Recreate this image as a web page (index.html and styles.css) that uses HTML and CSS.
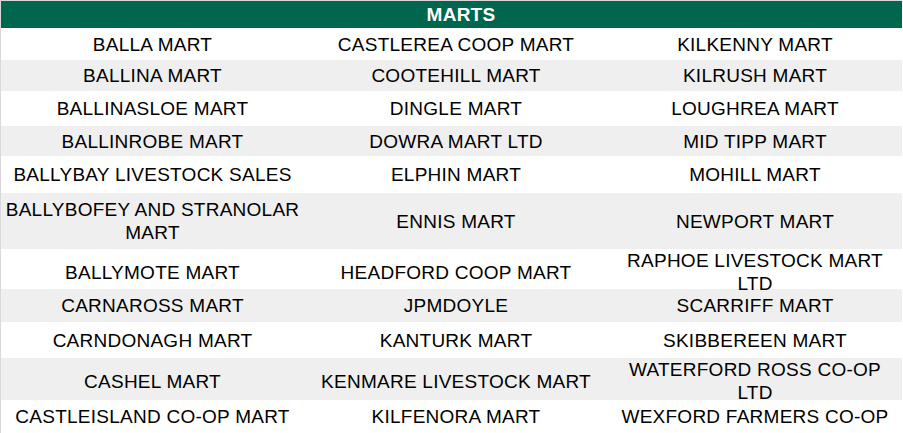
FILE: index.html
```html
<!DOCTYPE html>
<html>
<head>
<meta charset="utf-8">
<link rel="stylesheet" href="styles.css">
</head>
<body>
<div class="marts">
  <div class="head">MARTS</div>
  <div class="row h32"><div class="cell">BALLA MART</div><div class="cell">CASTLEREA COOP MART</div><div class="cell">KILKENNY MART</div></div>
  <div class="row alt h31"><div class="cell">BALLINA MART</div><div class="cell">COOTEHILL MART</div><div class="cell">KILRUSH MART</div></div>
  <div class="row h35"><div class="cell">BALLINASLOE MART</div><div class="cell">DINGLE MART</div><div class="cell">LOUGHREA MART</div></div>
  <div class="row alt h30"><div class="cell">BALLINROBE MART</div><div class="cell">DOWRA MART LTD</div><div class="cell">MID TIPP MART</div></div>
  <div class="row h37"><div class="cell">BALLYBAY LIVESTOCK SALES</div><div class="cell">ELPHIN MART</div><div class="cell">MOHILL MART</div></div>
  <div class="row alt h56"><div class="cell">BALLYBOFEY AND STRANOLAR MART</div><div class="cell">ENNIS MART</div><div class="cell">NEWPORT MART</div></div>
  <div class="row h40"><div class="cell">BALLYMOTE MART</div><div class="cell">HEADFORD COOP MART</div><div class="cell">RAPHOE LIVESTOCK MART LTD</div></div>
  <div class="row alt h33"><div class="cell">CARNAROSS MART</div><div class="cell">JPMDOYLE</div><div class="cell">SCARRIFF MART</div></div>
  <div class="row h36"><div class="cell">CARNDONAGH MART</div><div class="cell">KANTURK MART</div><div class="cell">SKIBBEREEN MART</div></div>
  <div class="row alt h42"><div class="cell">CASHEL MART</div><div class="cell">KENMARE LIVESTOCK MART</div><div class="cell">WATERFORD ROSS CO-OP LTD</div></div>
  <div class="row h33"><div class="cell">CASTLEISLAND CO-OP MART</div><div class="cell">KILFENORA MART</div><div class="cell">WEXFORD FARMERS CO-OP</div></div>
</div>
</body>
</html>
```
FILE: styles.css
```css
html, body {
  margin: 0;
  padding: 0;
  background: #ffffff;
}
body {
  font-family: "Liberation Sans", Arial, sans-serif;
  font-size: 19px;
  letter-spacing: 0.25px;
  color: #000000;
  overflow: hidden;
}
.marts {
  width: 901px;
  border-top: 1px solid #d9d9d9;
  border-left: 1px solid #d9d9d9;
}
.head {
  height: 27px;
  background: #00664d;
  color: #ffffff;
  font-weight: bold;
  display: flex;
  align-items: center;
  justify-content: center;
  line-height: 23px;
  padding-left: 19px;
}
.row {
  display: grid;
  grid-template-columns: 303px 304px 294px;
  background: #ffffff;
}
.row.alt {
  background: #efefef;
}
.cell {
  display: flex;
  align-items: center;
  justify-content: center;
  text-align: center;
  line-height: 23px;
  padding: 0 6px;
  min-width: 0;
}
.cell:first-child {
  padding: 0 2px;
}
.h30 { height: 30px; }
.h31 { height: 31px; }
.h32 { height: 32px; }
.h33 { height: 33px; }
.h35 { height: 35px; }
.h36 { height: 36px; }
.h37 { height: 37px; }
.h40 { height: 40px; }
.h42 { height: 42px; }
.h56 { height: 56px; }
```
